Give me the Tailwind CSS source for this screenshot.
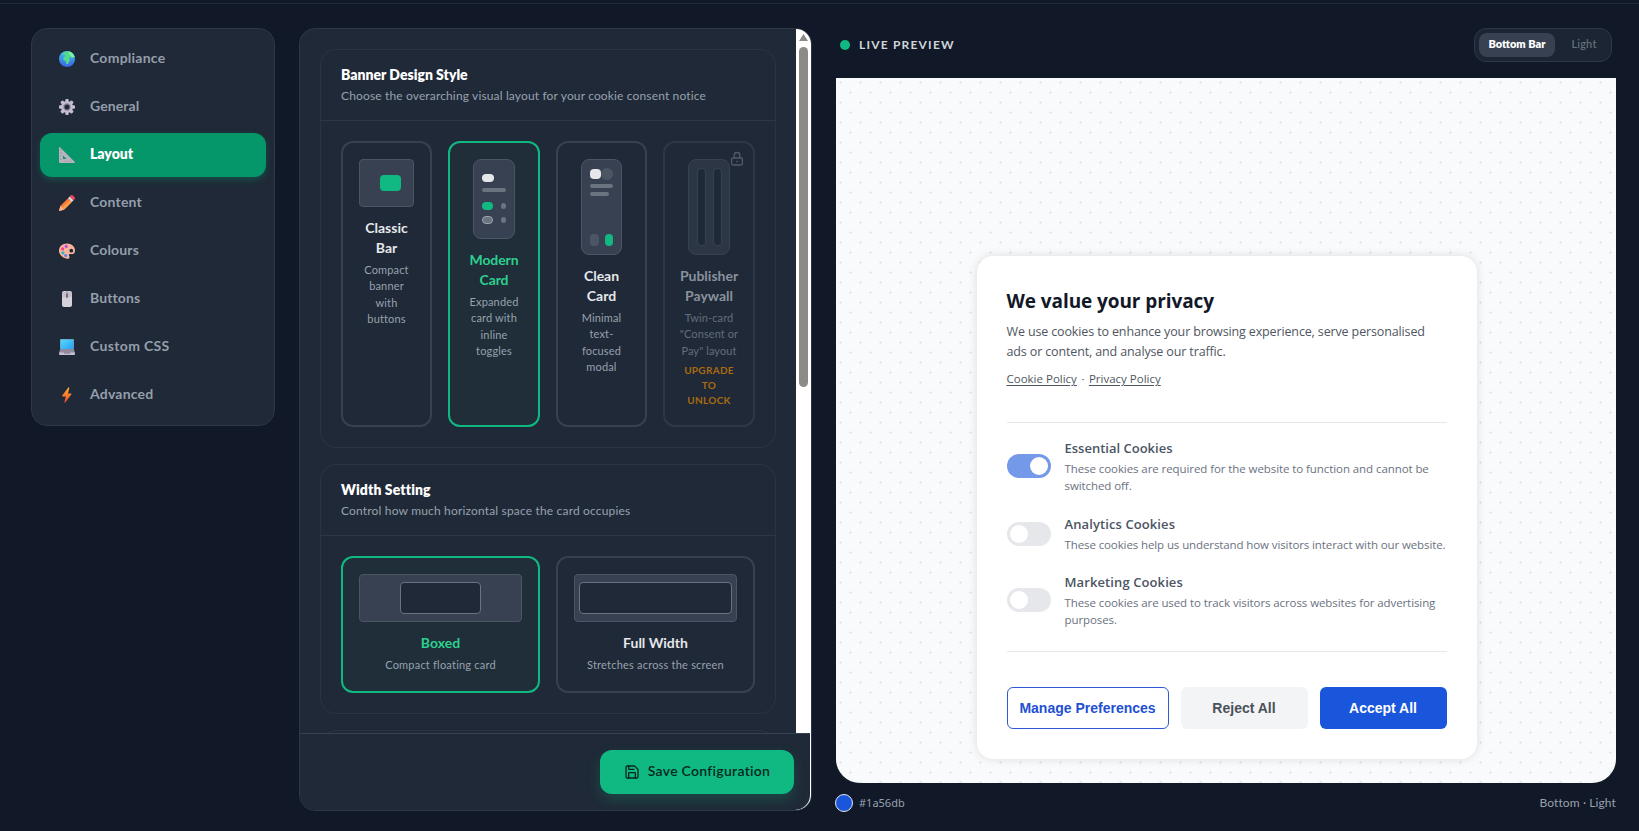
<!DOCTYPE html>
<html lang="en">
<head>
<meta charset="utf-8">
<title>Cookie banner configuration</title>
<script src="https://cdn.jsdelivr.net/npm/@tailwindcss/browser@4"></script>
</head>
<body class="h-[831px] overflow-hidden bg-[#111827] font-['Lato',sans-serif] pt-[3px]">
<div class="border-t border-[#1f2937] pt-6 pl-[31px] pr-[23px] flex items-start">

  <!-- Settings navigation -->
  <nav class="w-[244px] shrink-0 rounded-2xl border border-[#2d3746] bg-[#1f2937] p-2 flex flex-col gap-1 text-sm font-bold text-[#959eab]">
    <a class="h-11 rounded-xl px-4 flex items-center gap-3"><span class="w-[22px] flex justify-center"><svg width="16" height="16" viewBox="0 0 16 16"><defs><linearGradient id="sea" x1="0" y1="0" x2="0" y2="1"><stop stop-color="#3fc4f5"/><stop offset="1" stop-color="#3b62df"/></linearGradient></defs><circle cx="8" cy="8" r="8" fill="url(#sea)"/><path d="M3 3C5 1 8 .2 10 .4c3 .8 5 3 5.600 5.600L13 7.500 11.500 6 10 7l1 2-2 4-1.500.5L6.500 10 4 8.500 5 6 7 5 5.500 4z" fill="#55d98c"/><path d="M10 .4c3 .8 5 3 5.600 5.600L13 6 10 3z" fill="#7df2a4"/></svg></span><span class="pb-0.5 tracking-[0.25px]">Compliance</span></a>
    <a class="h-11 rounded-xl px-4 flex items-center gap-3"><span class="w-[22px] flex justify-center"><svg width="16" height="16" viewBox="0 0 16 16"><g fill="#c5bdd0"><circle cx="8" cy="8" r="6"/><rect x="6.300" y="0" width="3.400" height="16" rx="1"/><rect x="0" y="6.300" width="16" height="3.400" rx="1"/><g transform="rotate(45 8 8)"><rect x="6.300" y="0" width="3.400" height="16" rx="1"/><rect x="0" y="6.300" width="16" height="3.400" rx="1"/></g></g><circle cx="8" cy="8" r="3.700" fill="#8f869c"/><circle cx="8" cy="8" r="2.500" fill="#1f2937"/></svg></span><span class="pb-0.5 tracking-[0.1px]">General</span></a>
    <a class="h-11 rounded-xl px-4 flex items-center gap-3 bg-[#059669] text-white font-extrabold shadow-[0_3px_6px_rgba(5,150,105,0.35)]"><span class="w-[22px] flex justify-center"><svg width="16" height="16" viewBox="0 0 16 16"><path d="M0 .6Q.5-.3 1.300.5L15.600 14.800Q16.300 16 15 16H1Q0 16 0 15zM4 8.500V12h3.600z" fill="#b9b3bf" fill-rule="evenodd"/><path d="M1 3h1.500M1 6h1.500M1 9h1.500M1 12h1.500M6 14.800v-1M9 14.800v-1M12 14.800v-1" stroke="#8d8794" stroke-width=".7"/></svg></span><span class="pb-0.5">Layout</span></a>
    <a class="h-11 rounded-xl px-4 flex items-center gap-3"><span class="w-[22px] flex justify-center"><svg width="16" height="16" viewBox="0 0 16 16"><path d="M1.500 10.700 9 3.200l3.800 3.800-7.500 7.500L.8 15.900Q0 16 .1 15.200z" fill="#f97a35"/><path d="m3.500 12.500 7.500-7.400 1.800 1.900-7.500 7.500z" fill="#ffa04d"/><path d="m9 3.200 1.700-1.700 3.800 3.800L12.800 7z" fill="#e0dbe6"/><path d="m10.700 1.500 1-1q1-.9 2 0l1.800 1.800q.9 1 0 2l-1 1z" fill="#f5475f"/><path d="M1.500 10.700 5.300 14.500.8 15.900Q0 16 .1 15.200z" fill="#f3b68a"/></svg></span><span class="pb-0.5 tracking-[0.2px]">Content</span></a>
    <a class="h-11 rounded-xl px-4 flex items-center gap-3"><span class="w-[22px] flex justify-center"><svg width="16" height="16" viewBox="0 0 16 16"><path d="M8 .5c4.500 0 8 3 8 7 0 3-2 4-4 3.500-2-.3-2.500.7-1.800 2 .8 1.600 0 2.700-1.700 2.700C4 15.500 0 12 0 7.800 0 3.500 3.500.5 8 .5z" fill="#fbb49c"/><circle cx="12.300" cy="7.700" r="1.900" fill="#1f2937"/><circle cx="7.200" cy="3.400" r="1.600" fill="#b150e8"/><circle cx="3.600" cy="5.800" r="1.600" fill="#ee3f8e"/><circle cx="3.900" cy="9.800" r="1.600" fill="#25b8c9"/><circle cx="6.700" cy="12.500" r="1.500" fill="#4c86ef"/></svg></span><span class="pb-0.5 tracking-[0.15px]">Colours</span></a>
    <a class="h-11 rounded-xl px-4 flex items-center gap-3"><span class="w-[22px] flex justify-center"><svg width="16" height="16" viewBox="0 0 16 16"><rect x="3" y="0" width="10" height="16" rx="2" fill="#d6d0da"/><path d="M3.500 1h9v5h-9z" fill="#c4bdca"/><path d="M8 0v7" stroke="#857d8e" stroke-width=".8"/><rect x="7.100" y="2.500" width="1.800" height="4.500" rx=".9" fill="#6f6878"/></svg></span><span class="pb-0.5 tracking-[0.1px]">Buttons</span></a>
    <a class="h-11 rounded-xl px-4 flex items-center gap-3"><span class="w-[22px] flex justify-center"><svg width="16" height="16" viewBox="0 0 16 16"><defs><linearGradient id="scr" x1="0" y1="0" x2="1" y2="1"><stop stop-color="#54dcff"/><stop offset="1" stop-color="#2c9df2"/></linearGradient></defs><rect x="1" y="0" width="14" height="11" rx="1" fill="#7a8aa0"/><rect x="1.500" y=".5" width="13" height="9.500" fill="url(#scr)"/><path d="M1 10.500h14l1 3.500H0z" fill="#8f8a9c"/><rect y="13.500" width="16" height="2.500" rx=".8" fill="#c4bfd0"/><path d="M5 14h6" stroke="#777184"/></svg></span><span class="pb-0.5 tracking-[0.35px]">Custom CSS</span></a>
    <a class="h-11 rounded-xl px-4 flex items-center gap-3"><span class="w-[22px] flex justify-center"><svg width="16" height="16" viewBox="0 0 16 16"><defs><linearGradient id="bolt" x1="0" y1="0" x2="0" y2="1"><stop stop-color="#ffb02e"/><stop offset="1" stop-color="#f2462f"/></linearGradient></defs><path d="M9.300.4 3.200 8.600q-.4.8.5.9h3.100l-1.400 5.700q0 1 .8.4l6.200-8.300q.4-.8-.5-.9H9l1.300-5.500q0-1.200-1-.5z" fill="url(#bolt)"/></svg></span><span class="pb-0.5 tracking-[0.2px]">Advanced</span></a>
  </nav>

  <!-- Options panel -->
  <main class="ml-6 w-[513px] h-[783px] shrink-0 rounded-2xl border border-[#2d3746] bg-[#1f2937] overflow-hidden flex flex-col">
    <div class="h-[704px] shrink-0 flex overflow-hidden">
      <div class="w-[496px] shrink-0 p-5 flex flex-col gap-4">

        <section class="rounded-2xl border border-[#2a3544] shrink-0">
          <header class="px-5 pt-[15px] pb-4 border-b border-[#2d3746]">
            <h2 class="text-sm leading-5 font-extrabold text-white">Banner Design Style</h2>
            <p class="mt-[3px] text-xs leading-4 tracking-[0.145px] text-[#98a1ae]">Choose the overarching visual layout for your cookie consent notice</p>
          </header>
          <div class="p-5 grid grid-cols-[91px_92px_91px_92px] auto-rows-[286px] gap-4 text-center text-[11px] leading-[16.4px] tracking-[0.15px] text-[#98a1ae]">
            <div class="rounded-xl border-2 border-[#374151] p-4">
              <div class="h-12 rounded border border-[#4b5563] bg-[#374151] flex items-center justify-end pr-3"><span class="w-[21px] h-4 rounded bg-[#10b981]"></span></div>
              <h3 class="mt-[11px] text-sm leading-5 font-bold tracking-normal text-[#e5e7eb]">Classic<br>Bar</h3>
              <p class="mt-1">Compact<br>banner<br>with<br>buttons</p>
            </div>
            <div class="rounded-xl border-2 border-[#10b981] bg-[#1f2e38] p-4 flex flex-col items-center">
              <div class="w-[42px] h-20 rounded-lg border border-[#4b5563] bg-[#374151] pl-2 pt-3.5">
                <div class="w-3 h-2 rounded bg-[#e5e7eb]"></div>
                <div class="mt-1.5 w-6 h-1 rounded-sm bg-[#6b7280]"></div>
                <div class="mt-2.5 w-6 h-2 flex items-center justify-between"><span class="w-[11px] h-2 rounded bg-[#10b981]"></span><span class="w-[5px] h-1.5 rounded-full bg-[#6b7280]"></span></div>
                <div class="mt-1.5 w-6 h-2 flex items-center justify-between"><span class="w-[11px] h-2 rounded border border-[#9ca3af] bg-[#6b7280]"></span><span class="w-[5px] h-1.5 rounded-full bg-[#6b7280]"></span></div>
              </div>
              <h3 class="mt-[11px] text-sm leading-5 font-bold tracking-[-0.1px] text-[#2dd08f]">Modern<br>Card</h3>
              <p class="mt-1 whitespace-nowrap">Expanded<br>card with<br>inline<br>toggles</p>
            </div>
            <div class="rounded-xl border-2 border-[#374151] p-4 flex flex-col items-center">
              <div class="w-[41px] h-24 rounded-lg border border-[#4b5563] bg-[#374151] px-2 pt-2 pb-2 flex flex-col">
                <div class="flex items-center"><span class="w-[11px] h-2.5 rounded bg-[#e5e7eb]"></span><span class="w-3 h-3 rounded-full bg-[#4b5563]"></span></div>
                <div class="mt-1 w-[23px] h-1 shrink-0 rounded-sm bg-[#6b7280]"></div>
                <div class="mt-1 w-[19px] h-1 shrink-0 rounded-sm bg-[#6b7280]"></div>
                <div class="mt-auto flex justify-between w-[23px]"><span class="w-[9px] h-3 rounded bg-[#4b5563]"></span><span class="w-2 h-3 rounded bg-[#10b981]"></span></div>
              </div>
              <h3 class="mt-[11px] text-sm leading-5 font-bold tracking-normal text-[#e5e7eb]">Clean<br>Card</h3>
              <p class="mt-1">Minimal<br>text-<br>focused<br>modal</p>
            </div>
            <div class="relative rounded-xl border-2 border-[#2d3746] p-4 flex flex-col items-center">
              <svg class="absolute right-[9px] top-2" width="14" height="16" viewBox="0 0 14 16" fill="none" stroke="#525b69" stroke-width="1.300"><rect x="1.600" y="7" width="10.800" height="7" rx="1.500"/><path d="M4.200 7V4.300a2.800 2.800 0 0 1 5.600 0V7M7 9.800v1.400"/></svg>
              <div class="w-[42px] h-24 rounded-lg border border-[#374250] bg-[#2c3644] flex justify-center gap-[7px] pt-2"><span class="w-[9px] h-[78px] rounded border border-[#364150] bg-[#1f2937]"></span><span class="w-[9px] h-[78px] rounded border border-[#364150] bg-[#1f2937]"></span></div>
              <h3 class="mt-[11px] text-sm leading-5 font-bold tracking-normal text-[#8a919c]">Publisher<br>Paywall</h3>
              <p class="mt-1 whitespace-nowrap tracking-[0.1px] text-[#646d7a]">Twin-card<br>"Consent or<br>Pay" layout</p>
              <p class="mt-1 text-[10px] leading-[15px] font-bold tracking-[0.3px] text-[#a96a10]">UPGRADE<br>TO<br>UNLOCK</p>
            </div>
          </div>
        </section>

        <section class="rounded-2xl border border-[#2a3544] shrink-0">
          <header class="px-5 pt-[15px] pb-4 border-b border-[#2d3746]">
            <h2 class="text-sm leading-5 font-extrabold tracking-[0.1px] text-white">Width Setting</h2>
            <p class="mt-[3px] text-xs leading-4 tracking-[0.17px] text-[#98a1ae]">Control how much horizontal space the card occupies</p>
          </header>
          <div class="p-5 grid grid-cols-2 auto-rows-[137px] gap-4 text-center text-[11px] leading-[16.5px] tracking-[0.21px] text-[#98a1ae]">
            <div class="rounded-xl border-2 border-[#10b981] bg-[#1f2e38] p-4">
              <div class="h-12 rounded border border-[#4b5563] bg-[#374151] flex items-center justify-center"><span class="w-1/2 h-8 rounded border border-[#6b7280] bg-[#1f2937]"></span></div>
              <h3 class="mt-[11px] text-sm leading-5 font-bold tracking-[0.05px] text-[#2dd08f]">Boxed</h3>
              <p class="mt-1">Compact floating card</p>
            </div>
            <div class="rounded-xl border-2 border-[#374151] p-4">
              <div class="h-12 rounded border border-[#4b5563] bg-[#374151] flex items-center px-1"><span class="flex-1 h-8 rounded border border-[#6b7280] bg-[#1f2937]"></span></div>
              <h3 class="mt-[11px] text-sm leading-5 font-bold tracking-normal text-[#e5e7eb]">Full Width</h3>
              <p class="mt-1">Stretches across the screen</p>
            </div>
          </div>
        </section>

        <section class="rounded-2xl border border-[#2a3544] h-40 shrink-0"></section>
      </div>
      <!-- Scrollbar -->
      <div class="w-[15px] bg-white flex flex-col items-center pt-[5px]">
        <svg width="9" height="7" viewBox="0 0 9 7"><path d="M4.500 0 9 7H0z" fill="#8b8b88"/></svg>
        <div class="mt-1.5 w-[9px] h-[340px] rounded-full bg-[#8b8b88]"></div>
      </div>
    </div>
    <div class="h-[77px] shrink-0 bg-[linear-gradient(to_right,#1f2937_90%,#ffffff_90%)]">
      <footer class="h-[77px] w-[510px] rounded-br-[15px] border-t border-[#374151] bg-[#1f2937] pt-4 pr-4 flex justify-end items-start">
        <button class="h-11 w-[194px] rounded-xl bg-[#10b981] text-[#06281f] text-sm font-semibold flex items-center justify-center gap-2 shadow-[0_6px_14px_rgba(16,185,129,0.22)]">
          <svg width="16" height="16" viewBox="0 0 24 24" fill="none" stroke="currentColor" stroke-width="2" stroke-linecap="round" stroke-linejoin="round"><path d="M15.200 3a2 2 0 0 1 1.400.6l3.800 3.800a2 2 0 0 1 .6 1.400V19a2 2 0 0 1-2 2H5a2 2 0 0 1-2-2V5a2 2 0 0 1 2-2z"/><path d="M17 21v-7a1 1 0 0 0-1-1H8a1 1 0 0 0-1 1v7M7 3v4a1 1 0 0 0 1 1h7"/></svg>
          <span class="pb-0.5 tracking-[0.28px] whitespace-nowrap">Save Configuration</span>
        </button>
      </footer>
    </div>
  </main>

  <!-- Live preview -->
  <aside class="ml-6 flex-1 min-w-0">
    <div class="h-[34px] px-1 flex items-center justify-between">
      <div class="flex items-center gap-[9px]"><span class="size-2.5 rounded-full bg-[#10b981]"></span><span class="text-xs leading-4 font-bold tracking-[1.2px] text-[#d1d5db]">LIVE PREVIEW</span></div>
      <div class="h-[34px] w-[138px] rounded-xl border border-[#2d3746] bg-[#1b2533] p-1 flex text-[11px]"><span class="w-[76px] rounded-lg bg-[#374151] text-white font-extrabold pb-px flex items-center justify-center">Bottom Bar</span><span class="flex-1 flex items-center justify-center font-medium pl-1.5 pb-px tracking-[0.2px] text-[#6b7280]">Light</span></div>
    </div>
    <div class="mt-4 h-[705px] rounded-b-3xl bg-[#f9fafb] bg-[radial-gradient(circle_at_4.5px_4.5px,#e5e7eb_1px,transparent_1.4px),radial-gradient(circle_at_14.5px_14.5px,#e5e7eb_1px,transparent_1.4px)] bg-[length:20px_20px] flex flex-col justify-end items-center pb-6 font-['Open_Sans',sans-serif]">
      <div class="ml-px w-[500px] h-[503px] rounded-2xl bg-white shadow-[0_0_10px_rgba(0,0,0,0.12)] px-[30px] pt-[30px]">
        <h1 class="text-[19px] leading-[30px] font-bold tracking-[-0.08px] text-[#111827]">We value your privacy</h1>
        <p class="mt-1.5 text-[12.5px] leading-5 tracking-[-0.135px] text-[#4f5661] whitespace-nowrap">We use cookies to enhance your browsing experience, serve personalised<br>ads or content, and analyse our traffic.</p>
        <p class="mt-2 text-[11.5px] leading-[17px] text-[#4f5661] flex"><span class="underline underline-offset-2">Cookie Policy</span><span class="w-3 text-center">·</span><span class="underline underline-offset-2">Privacy Policy</span></p>
        <div class="mt-[35px] h-[230px] border-y border-[#e5e7eb] pt-4 flex flex-col gap-[20px]">
          <div class="flex items-center gap-3.5">
            <span class="w-11 h-6 mb-0.5 shrink-0 rounded-full bg-[#7599e9] p-[3px] flex justify-end"><span class="size-[18px] rounded-full bg-white"></span></span>
            <div><h4 class="text-[13px] leading-[19px] font-semibold text-[#4b5563]">Essential Cookies</h4><p class="mt-0.5 text-[11.5px] leading-[17px] tracking-[-0.08px] text-[#6b7280] whitespace-nowrap">These cookies are required for the website to function and cannot be<br>switched off.</p></div>
          </div>
          <div class="flex items-center gap-3.5">
            <span class="w-11 h-6 shrink-0 rounded-full bg-[#e5e7eb] p-[3px] flex"><span class="size-[18px] rounded-full bg-white"></span></span>
            <div class="pt-px"><h4 class="text-[13px] leading-[19px] font-semibold tracking-[0.1px] text-[#4b5563]">Analytics Cookies</h4><p class="mt-0.5 text-[11.5px] leading-[17px] tracking-[-0.105px] text-[#6b7280] whitespace-nowrap">These cookies help us understand how visitors interact with our website.</p></div>
          </div>
          <div class="flex items-center gap-3.5">
            <span class="w-11 h-6 shrink-0 mb-0.5 rounded-full bg-[#e5e7eb] p-[3px] flex"><span class="size-[18px] rounded-full bg-white"></span></span>
            <div><h4 class="text-[13px] leading-[19px] font-semibold tracking-[0.1px] text-[#4b5563]">Marketing Cookies</h4><p class="mt-0.5 text-[11.5px] leading-[17px] tracking-[-0.09px] text-[#6b7280] whitespace-nowrap">These cookies are used to track visitors across websites for advertising<br>purposes.</p></div>
          </div>
        </div>
        <div class="mt-[35px] flex gap-3 font-['Liberation_Sans',sans-serif] text-sm font-bold">
          <button class="w-[162px] h-[42px] rounded-md border border-[#3158d6] text-[#2350d2] whitespace-nowrap">Manage Preferences</button>
          <button class="flex-1 h-[42px] rounded-md bg-[#f3f4f6] text-[#4b5159]">Reject All</button>
          <button class="flex-1 h-[42px] rounded-md bg-[#1a56db] text-white">Accept All</button>
        </div>
      </div>
    </div>
    <div class="mt-[11px] h-[18px] flex items-center justify-between text-xs text-[#98a1ae]">
      <div class="flex items-center gap-1.5"><span class="-ml-px size-[18px] rounded-full border border-[#e5e7eb] bg-[#1a56db]"></span><span class="font-['Noto_Sans',sans-serif] text-[11px]">#1a56db</span></div>
      <span class="tracking-[0.1px]">Bottom · Light</span>
    </div>
  </aside>
</div>
</body>
</html>
